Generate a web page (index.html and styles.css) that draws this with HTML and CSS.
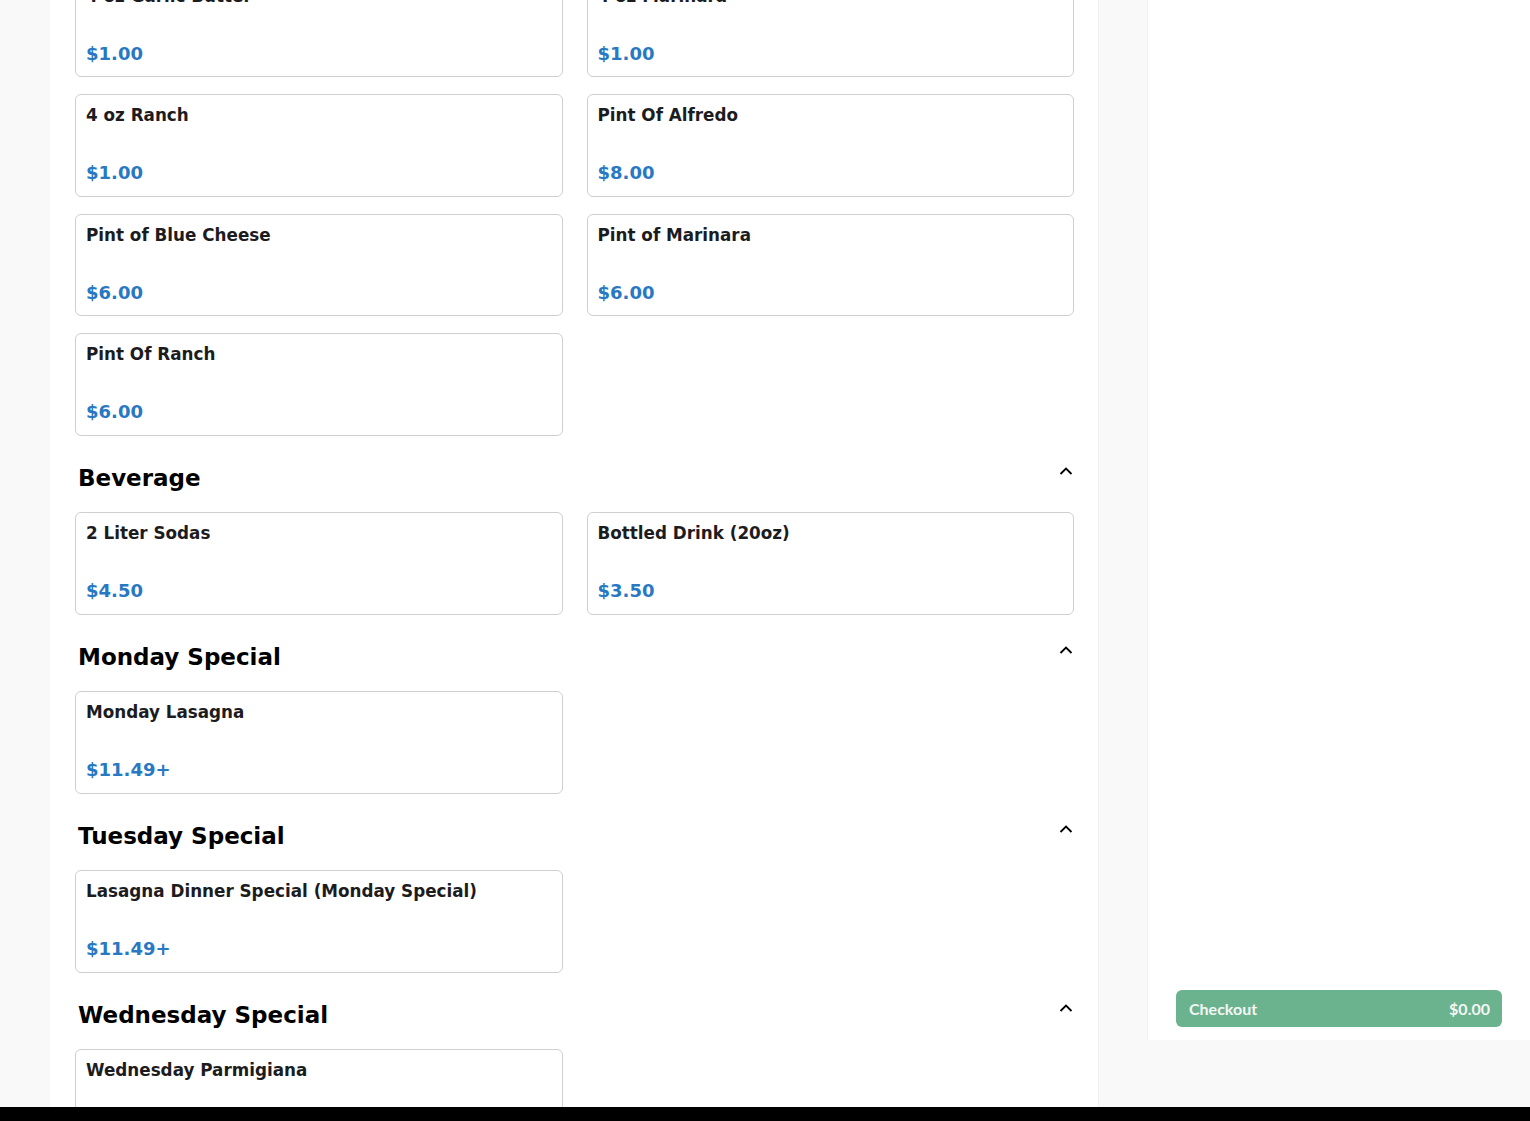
FILE: index.html
```html
<!DOCTYPE html>
<html lang="en">
<head>
<meta charset="utf-8">
<title>Menu</title>
<link rel="stylesheet" href="styles.css">
</head>
<body>
<div class="viewport">
  <main class="menu">
    <div class="grid first">
      <div class="card"><div class="name">4 oz Garlic Butter</div><div class="price">$1.00</div></div>
      <div class="card"><div class="name">4 oz Marinara</div><div class="price">$1.00</div></div>
      <div class="card"><div class="name">4 oz Ranch</div><div class="price">$1.00</div></div>
      <div class="card"><div class="name">Pint Of Alfredo</div><div class="price">$8.00</div></div>
      <div class="card"><div class="name">Pint of Blue Cheese</div><div class="price">$6.00</div></div>
      <div class="card"><div class="name">Pint of Marinara</div><div class="price">$6.00</div></div>
      <div class="card"><div class="name">Pint Of Ranch</div><div class="price">$6.00</div></div>
    </div>

    <section class="section">
      <div class="sec-head"><h2>Beverage</h2><svg class="chev" viewBox="0 0 14 10" width="14" height="10"><path d="M1.5 8 L7 2.5 L12.5 8" fill="none" stroke="#000" stroke-width="1.8"/></svg></div>
      <div class="grid">
        <div class="card"><div class="name">2 Liter Sodas</div><div class="price">$4.50</div></div>
        <div class="card"><div class="name">Bottled Drink (20oz)</div><div class="price">$3.50</div></div>
      </div>
    </section>

    <section class="section">
      <div class="sec-head"><h2>Monday Special</h2><svg class="chev" viewBox="0 0 14 10" width="14" height="10"><path d="M1.5 8 L7 2.5 L12.5 8" fill="none" stroke="#000" stroke-width="1.8"/></svg></div>
      <div class="grid">
        <div class="card"><div class="name">Monday Lasagna</div><div class="price">$11.49+</div></div>
      </div>
    </section>

    <section class="section">
      <div class="sec-head"><h2>Tuesday Special</h2><svg class="chev" viewBox="0 0 14 10" width="14" height="10"><path d="M1.5 8 L7 2.5 L12.5 8" fill="none" stroke="#000" stroke-width="1.8"/></svg></div>
      <div class="grid">
        <div class="card"><div class="name">Lasagna Dinner Special (Monday Special)</div><div class="price">$11.49+</div></div>
      </div>
    </section>

    <section class="section">
      <div class="sec-head"><h2>Wednesday Special</h2><svg class="chev" viewBox="0 0 14 10" width="14" height="10"><path d="M1.5 8 L7 2.5 L12.5 8" fill="none" stroke="#000" stroke-width="1.8"/></svg></div>
      <div class="grid">
        <div class="card"><div class="name">Wednesday Parmigiana</div><div class="price">$12.49+</div></div>
      </div>
    </section>
  </main>

  <aside class="cart">
    <div class="cart-body"></div>
    <button class="checkout"><span>Checkout</span><span>$0.00</span></button>
  </aside>
</div>
<div class="bottom-bar"></div>
</body>
</html>
```

FILE: styles.css
```css
* { box-sizing: border-box; }

html, body {
  margin: 0;
  padding: 0;
  height: 1121px;
  overflow: hidden;
}

body {
  background: #f9f9f9;
  font-family: "DejaVu Sans", Verdana, sans-serif;
  display: flex;
  flex-direction: column;
}

.viewport {
  flex: 1;
  min-height: 0;
  overflow: hidden;
  display: flex;
  align-items: flex-start;
  padding-left: 50px;
}

.menu {
  width: 1049px;
  height: 100%;
  background: #fff;
  padding: 0 24px 0 25px;
  border-right: 1px solid #f1f1f1;
  flex-shrink: 0;
}

.grid {
  display: grid;
  grid-template-columns: 1fr 1fr;
  column-gap: 24px;
  row-gap: 17px;
}

.grid.first {
  margin-top: -25.5px;
}

.card {
  height: 102.5px;
  border: 1px solid #cfcfcf;
  border-radius: 6px;
  padding: 10px 10px 10.5px;
  display: flex;
  flex-direction: column;
  justify-content: space-between;
}

.name {
  font-weight: bold;
  font-size: 16.8px;
  line-height: 20px;
  color: #1c1c1e;
}

.price {
  font-weight: bold;
  font-size: 18px;
  line-height: 24px;
  color: #2878c2;
}

.section {
  padding-top: 27px;
}

.sec-head {
  display: flex;
  justify-content: space-between;
  align-items: flex-start;
  padding-left: 3px;
  padding-right: 1px;
  height: 30px;
  margin-bottom: 19.5px;
}

.sec-head h2 {
  margin: 0;
  font-size: 23px;
  line-height: 30px;
  font-weight: bold;
  color: #000;
}

.chev {
  margin-top: 3px;
}

.cart {
  margin-left: 48px;
  width: 383px;
  height: 1040px;
  background: #fff;
  border-left: 1px solid #f1f1f1;
  display: flex;
  flex-direction: column;
  padding: 0 28px 13px 28px;
}

.cart-body {
  flex: 1;
}

.checkout {
  height: 37px;
  width: 326px;
  border: none;
  border-radius: 6px;
  background: #6bb28f;
  color: #f3f7f4;
  font-family: "Lato", "Open Sans", sans-serif;
  font-weight: bold;
  font-size: 16px;
  display: flex;
  justify-content: space-between;
  align-items: center;
  padding: 0 12px 1px 13px;
}

.bottom-bar {
  height: 14px;
  background: #000;
  flex-shrink: 0;
}
```
